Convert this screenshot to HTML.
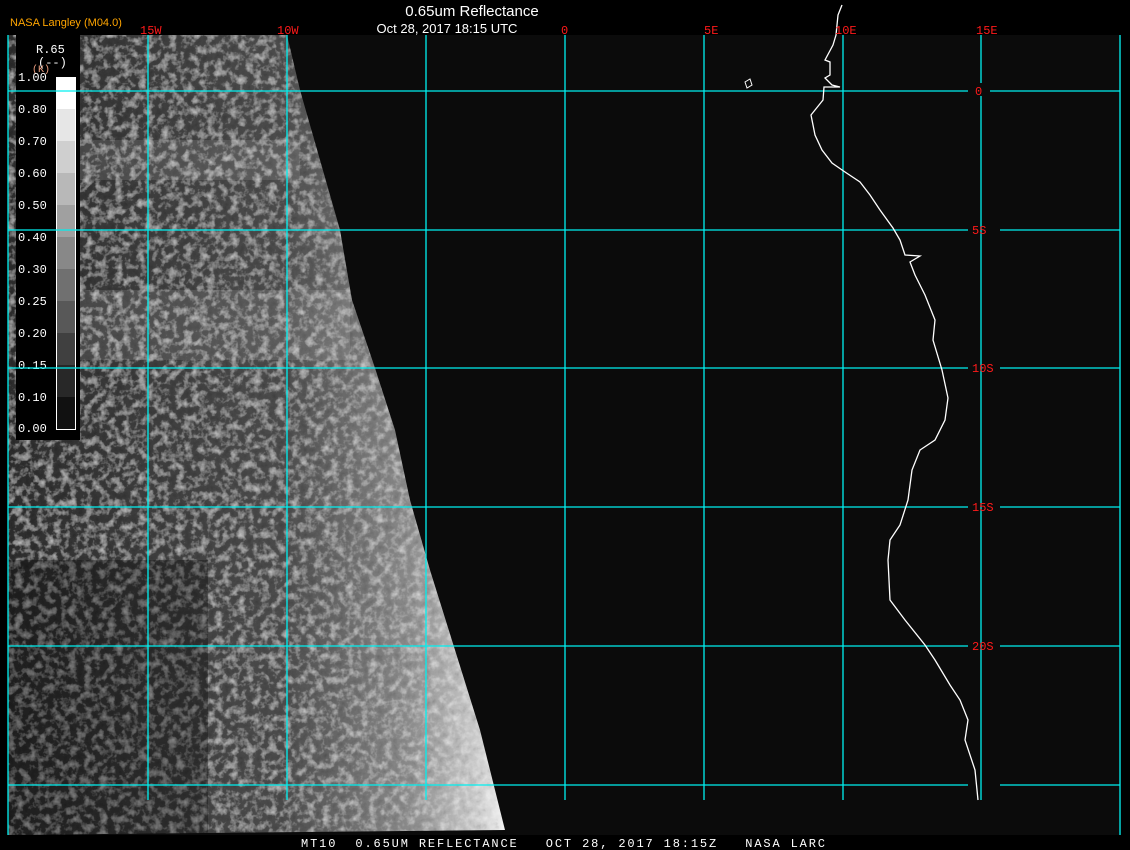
<!DOCTYPE html>
<html><head><meta charset="utf-8"><style>
html,body{margin:0;padding:0;background:#000;width:1130px;height:850px;overflow:hidden}
svg{display:block}
.m{font-family:"Liberation Mono","DejaVu Sans Mono",monospace}
.s{font-family:"Liberation Sans",sans-serif}
</style></head><body>
<svg width="1130" height="850" viewBox="0 0 1130 850" xmlns="http://www.w3.org/2000/svg">
<defs>
<filter id="n" x="0" y="0" width="100%" height="100%">
<feTurbulence type="fractalNoise" baseFrequency="0.13" numOctaves="3" seed="4" result="t"/>
<feColorMatrix in="t" type="matrix" values="0 0 0 0 1  0 0 0 0 1  0 0 0 0 1  1.0 0 0 0 -0.45" result="w"/>
<feColorMatrix in="t" type="matrix" values="0 0 0 0 0  0 0 0 0 0  0 0 0 0 0  -0.9 0 0 0 0.35" result="b"/>
<feMerge><feMergeNode in="SourceGraphic"/><feMergeNode in="w"/><feMergeNode in="b"/></feMerge>
</filter>
<linearGradient id="g" x1="0" y1="0" x2="1" y2="0">
<stop offset="0" stop-color="#2c2c2c"/><stop offset="0.55" stop-color="#4c4c4c"/><stop offset="0.8" stop-color="#8a8a8a"/><stop offset="0.95" stop-color="#d0d0d0"/><stop offset="1" stop-color="#f4f4f4"/>
</linearGradient>
<clipPath id="c"><polygon points="8,35 287,35 300,90 340,230 352,300 375,368 395,430 410,500 430,570 455,650 480,730 505,830 8,835"/></clipPath>
</defs>
<rect x="8" y="35" width="1113" height="800" fill="#0b0b0b"/>
<g clip-path="url(#c)">
<g filter="url(#n)"><rect x="8" y="35" width="500" height="800" fill="url(#g)"/></g>
<rect x="8" y="560" width="200" height="275" fill="#000" opacity="0.3"/>
<rect x="60" y="140" width="240" height="40" fill="#fff" opacity="0.1"/>
<rect x="60" y="290" width="290" height="70" fill="#fff" opacity="0.1"/>
</g>
<rect x="16" y="35" width="64" height="405" fill="#000"/>
<g class="m">
<text x="36" y="53" fill="#fff" font-size="12">R.65</text>
<text x="38" y="66" fill="#fff" font-size="12">(--)</text>
<text x="32" y="72" fill="#f0a080" font-size="10">(K)</text>
<g fill="#fff" font-size="12">
<text x="18" y="81">1.00</text><text x="18" y="113">0.80</text><text x="18" y="145">0.70</text><text x="18" y="177">0.60</text><text x="18" y="209">0.50</text><text x="18" y="241">0.40</text><text x="18" y="273">0.30</text><text x="18" y="305">0.25</text><text x="18" y="337">0.20</text><text x="18" y="369">0.15</text><text x="18" y="401">0.10</text><text x="18" y="432">0.00</text>
</g>
</g>
<rect x="56" y="77" width="19" height="33" fill="#fff"/>
<rect x="56" y="109" width="19" height="33" fill="#e6e6e6"/>
<rect x="56" y="141" width="19" height="33" fill="#cfcfcf"/>
<rect x="56" y="173" width="19" height="33" fill="#b8b8b8"/>
<rect x="56" y="205" width="19" height="33" fill="#a0a0a0"/>
<rect x="56" y="237" width="19" height="33" fill="#888"/>
<rect x="56" y="269" width="19" height="33" fill="#707070"/>
<rect x="56" y="301" width="19" height="33" fill="#585858"/>
<rect x="56" y="333" width="19" height="33" fill="#404040"/>
<rect x="56" y="365" width="19" height="33" fill="#282828"/>
<rect x="56" y="397" width="19" height="32" fill="#111"/>
<rect x="56.5" y="77.5" width="19" height="352" fill="none" stroke="#fff"/>
<g stroke="#00f0f0" stroke-width="1.3">
<line x1="8" y1="35" x2="8" y2="835"/><line x1="1120" y1="35" x2="1120" y2="835"/>
<line x1="148" y1="35" x2="148" y2="800"/><line x1="287" y1="35" x2="287" y2="800"/><line x1="426" y1="35" x2="426" y2="800"/><line x1="565" y1="35" x2="565" y2="800"/><line x1="704" y1="35" x2="704" y2="800"/><line x1="843" y1="35" x2="843" y2="800"/><line x1="981" y1="35" x2="981" y2="83"/><line x1="981" y1="96" x2="981" y2="800"/>
<line x1="8" y1="91" x2="968" y2="91"/><line x1="990" y1="91" x2="1120" y2="91"/>
<line x1="8" y1="230" x2="968" y2="230"/><line x1="1000" y1="230" x2="1120" y2="230"/>
<line x1="8" y1="368" x2="968" y2="368"/><line x1="1000" y1="368" x2="1120" y2="368"/>
<line x1="8" y1="507" x2="968" y2="507"/><line x1="1000" y1="507" x2="1120" y2="507"/>
<line x1="8" y1="646" x2="968" y2="646"/><line x1="1000" y1="646" x2="1120" y2="646"/>
<line x1="8" y1="785" x2="968" y2="785"/><line x1="1000" y1="785" x2="1120" y2="785"/>
</g>
<polyline fill="none" stroke="#fff" stroke-width="1.3" points="842,5 838,15 836,35 833,45 825,60 830,62 830,75 825,78 832,85 840,87 824,87 823,100 815,110 811,115 815,135 822,150 832,163 845,172 860,182 870,195 880,210 893,228 900,240 905,255 920,256 910,262 915,275 925,295 935,320 933,340 942,370 948,398 945,420 935,440 920,450 912,470 908,500 900,525 890,540 888,560 890,600 905,620 925,645 935,660 950,685 960,700 968,720 965,740 975,770 978,800"/>
<polygon points="745,82 750,79 752,85 747,88" fill="none" stroke="#fff"/>
<text class="s" x="10" y="26" fill="#ffa500" font-size="11">NASA Langley (M04.0)</text>
<text class="s" x="472" y="16" fill="#fff" font-size="15" text-anchor="middle">0.65um Reflectance</text>
<text class="s" x="447" y="33" fill="#fff" font-size="13" text-anchor="middle">Oct 28, 2017 18:15 UTC</text>
<g fill="#ff1a1a" font-size="12" class="m">
<text x="140" y="34">15W</text><text x="277" y="34">10W</text><text x="561" y="34">0</text><text x="704" y="34">5E</text><text x="835" y="34">10E</text><text x="976" y="34">15E</text>
<text x="975" y="95">0</text><text x="972" y="234">5S</text><text x="972" y="372">10S</text><text x="972" y="511">15S</text><text x="972" y="650">20S</text>
</g>
<text class="m" x="563" y="847" fill="#fff" font-size="12" text-anchor="middle" textLength="524" lengthAdjust="spacing" xml:space="preserve">MT10  0.65UM REFLECTANCE   OCT 28, 2017 18:15Z   NASA LARC</text>
</svg>
</body></html>
